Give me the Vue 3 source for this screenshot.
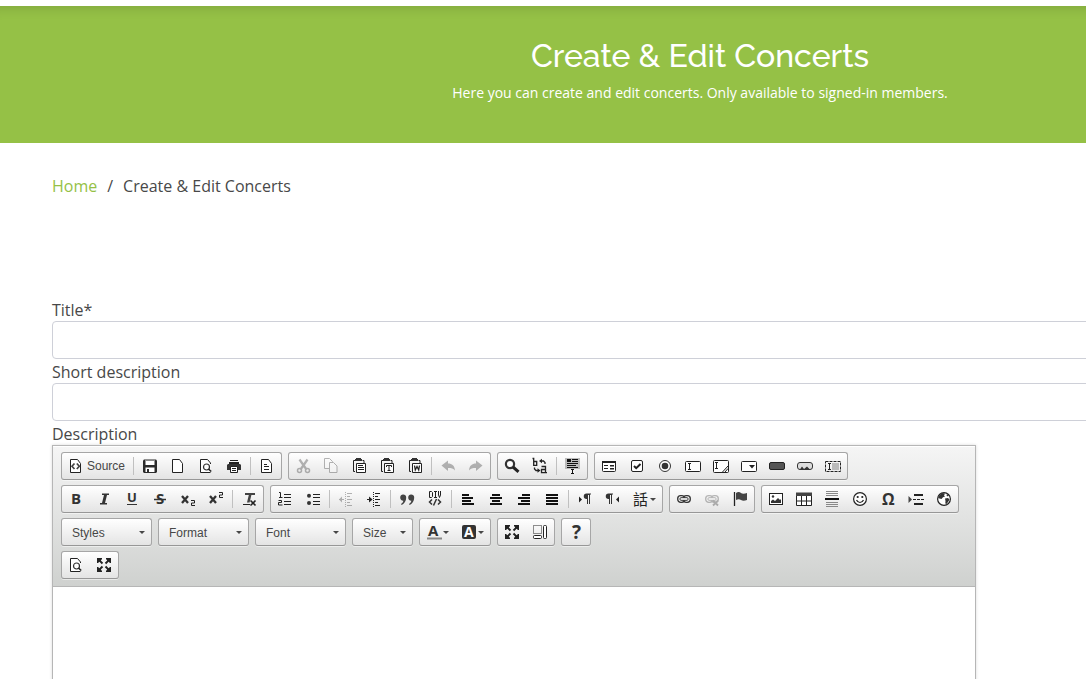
<script setup>
import { ref } from 'vue'

const title = ref('')
const shortDescription = ref('')
const body = ref('')

const page = '<path d="M2.5 1.5h7l3 4v9h-10z" fill="#fff" stroke="#222"/>'
const clip = '<path d="M4 2.5H2.5V13.5H4M11.5 2.5H13V5" fill="none" stroke="#222"/><path d="M5 0h5v1h1v2H4V1h1z" fill="#333"/><path d="M5.5 5.5h9v9h-9z" fill="#fff" stroke="#222"/>'
const expand = '<path d="M1 1h5v1L4.8 3.4l2.4 2.4-1.400 1.400-2.400-2.400L2 6H1zM15 1v5h-1l-1.400-1.200-2.400 2.400-1.400-1.400 2.400-2.400L10 2V1zM1 15v-5h1l1.400 1.200 2.400-2.400 1.400 1.400-2.400 2.400L6 14v1zM15 15h-5v-1l1.200-1.400-2.400-2.400 1.400-1.400 2.400 2.400L14 10h1z" fill="#222"/>'
const magnifierPage = '<path d="M12.500 6V5l-3-3.500h-7v13h10" fill="#fff" stroke="#222"/><circle cx="8.500" cy="9" r="3" fill="#fff" stroke="#333" stroke-width="1.200"/><path d="M10.500 11l2.700 2.500" stroke="#222" stroke-width="1.600"/>'
const chain = (c) => `<g fill="none" stroke="${c}" stroke-width="1.300"><rect x="1.700" y="4.700" width="7" height="6.600" rx="3"/><rect x="7.300" y="4.700" width="7" height="6.600" rx="3"/></g><rect x="4" y="6.700" width="8" height="2.600" rx="1" fill="#fff" stroke="${c}"/>`
const bars = (rows) => rows.map(([x, w], i) => `<rect x="${x}" y="${3 + i * 3}" width="${w}" height="2" fill="#111"/>`).join('')
const glyph = (ch, x, y, size) => `<text x="${x}" y="${y}" font-size="${size}" font-weight="bold" font-family="Open Sans, sans-serif" fill="#333">${ch}</text>`
const indentLines = '<path d="M7.500 1v15" stroke="#222" stroke-dasharray="1 1"/><path d="M9 2.500h5M9 5.500h3M9 8.500h5M9 11.500h3M9 14.500h5" stroke="#222"/>'
const pilcrow = (x) => `<path transform="translate(${x} 0)" d="M7 2.500H2.500A2.300 2.300 0 0 0 2.500 8H3v5h1V4h1v9h1V3.500h1z" fill="#333"/>`

const icons = {
  source: page + '<path d="M6.500 5.500L4 8.300l2.500 2.700M8.800 5.500l2.500 2.800-2.500 2.700" fill="none" stroke="#444" stroke-width="1.700"/>',
  save: '<path d="M2 1.500h12l1 1V14l-1 1H2l-1-1V2.500z" fill="#2b2b2b"/><path d="M3.500 2h9v5h-9z" fill="#fff"/><path d="M3.500 2.500h9" stroke="#888"/><path d="M3.500 9.500h9V14h-9z" fill="#fff"/><path d="M5 11h2v3H5z" fill="#2b2b2b"/>',
  newpage: page,
  preview: magnifierPage,
  print: '<path d="M4 2h8v1H4zM3 4h10v2H3z" fill="#222"/><path d="M2 6h12l1 1v5h-3V9H4v3H1V7z" fill="#333"/><path d="M4.500 8.500h7v6h-7z" fill="#fff" stroke="#222"/><path d="M6 10.500h4M6 12.500h4" stroke="#222"/>',
  templates: page + '<path d="M5 6.500h3M5 8.500h5M5 11.500h5" stroke="#222"/>',
  cut: '<path d="M4.500 1.500l7 10M12.500 1.500l-7 10" stroke="#222" stroke-width="2.200"/><g fill="none" stroke="#222" stroke-width="1.500"><circle cx="4.500" cy="12.500" r="2"/><circle cx="12.500" cy="12.500" r="2"/></g>',
  copy: '<path d="M1.500 .500h5l3 3v7h-8z" fill="#fff" stroke="#222"/><path d="M6.500 4.500h4l3.500 3.500v6.500H6.500z" fill="#fff" stroke="#222"/>',
  paste: clip + '<path d="M7 7.500h5M7 9.500h6M7 11.500h6" stroke="#222"/>',
  pastetext: clip + '<path d="M7.500 9V7.500h5V9M10 7.500v5M8.500 12.500h3" stroke="#222" fill="none"/>',
  pasteword: clip + '<path d="M7.500 7.500l.8 4.500L10 8.500l1.700 3.500.8-4.500" stroke="#222" stroke-width="1.300" fill="none"/>',
  undo: '<path d="M1.500 7.500L8 2.500v3c4 0 6.500 2 7 7-1.500-2-3.500-2.500-7-2.500v3z" fill="#222"/>',
  redo: '<path d="M14.500 7.500L8 2.500v3c-4 0-6.500 2-7 7 1.500-2 3.500-2.500 7-2.500v3z" fill="#222"/>',
  find: '<circle cx="6" cy="6" r="4.100" fill="#fff" stroke="#333" stroke-width="2.200"/><path d="M9 9l5.500 4.800" stroke="#222" stroke-width="3"/>',
  replace: '<g fill="none" stroke="#222" stroke-width="1.300"><path d="M.500 .500h1.200v6.800h3V3.500h-3M9.500 8.500h4v6.200h-4v-3.200h4M13.500 14.600H15"/><path d="M13 6V4.500L11.500 3H9M2.500 9.500V11L4 12.500h2"/></g><path d="M10 .800v4.400L7 3zM5.500 10.300v4.400l3-2.200z" fill="#222"/>',
  selectall: '<path d="M0 0h15v11H0z" fill="#bbb"/><path d="M2 1h4v3H2z" fill="#111"/><path d="M7 1.500h6M7 3.500h6M2 5.500h11M2 7.500h9M2 9.500h11" stroke="#111"/><path d="M5 11h5v5H5z" fill="#f2f2f2"/><path d="M6 11.500h3M6 15.500h3M7.500 11v5" stroke="#111"/>',
  form: '<rect x="1.500" y="3.500" width="13" height="10" rx="1" fill="#fff" stroke="#222"/><path d="M1 3h14v2H1z" fill="#222"/><path d="M3 7.500h4M3 10.500h4" stroke="#222"/><path d="M9 7h4v1.500H9zM9 10h4v1.500H9z" fill="#222"/>',
  checkbox: '<rect x="2.500" y="2.500" width="11" height="11" rx="1.500" fill="#fff" stroke="#222"/><path d="M5 8l2.200 2.200L11.500 6" fill="none" stroke="#222" stroke-width="2"/>',
  radio: '<circle cx="8" cy="8" r="5.500" fill="#fff" stroke="#333"/><circle cx="8" cy="8" r="3.300" fill="#333"/>',
  textfield: '<rect x=".500" y="3.500" width="15" height="10" rx="1" fill="#fff" stroke="#222"/><path d="M3 5.500h3M3 11.500h3M4.500 5v7" stroke="#222"/>',
  textarea: '<rect x=".500" y="2.500" width="15" height="12" rx="1" fill="#fff" stroke="#222"/><path d="M2 4.500h3M2 10.500h3M3.500 4v7M9.500 14L15 8M12 14l3-3.500" stroke="#222"/>',
  select: '<rect x=".500" y="3.500" width="15" height="10" rx="1" fill="#fff" stroke="#222"/><path d="M8 7h6l-3 3.500z" fill="#222"/>',
  button: '<rect x=".500" y="4.500" width="15" height="7" rx="1.500" fill="#555" stroke="#222"/>',
  imagebutton: '<rect x=".500" y="4.500" width="15" height="7" rx="2.500" fill="#ddd" stroke="#333"/><path d="M2.500 12l2.500-3.500 2 2.500 3-2.500 3.500 3.500z" fill="#333"/>',
  hidden: '<path d="M7 5h7v7H7z" fill="#bbb"/><rect x=".500" y="3.500" width="15" height="10" fill="none" stroke="#222" stroke-dasharray="3 1"/><path d="M3 5.500h3M3 11.500h3M4.500 5v7" stroke="#222"/>',
  bold: glyph('B', 3, 13, 15),
  italic: '<path d="M6 2.500h7V4h-2L9 12h2v1.500H4V12h2l2-8H6z" fill="#333"/>',
  underline: glyph('U', 3, 11, 13) + '<path d="M3 13.500h10" stroke="#333"/>',
  strike: glyph('S', 4, 13, 15) + '<path d="M2 8.500h12" stroke="#333" stroke-width="1.500"/>',
  subscript: '<path d="M2 5l6 7M8 5l-6 7" stroke="#333" stroke-width="2.300"/><path d="M11 9.500h3.500v2.500h-3v2.500H15" fill="none" stroke="#222"/>',
  superscript: '<path d="M2 5l6 7M8 5l-6 7" stroke="#333" stroke-width="2.300"/><path d="M11 1.500h3.500V4h-3v2.500H15" fill="none" stroke="#222"/>',
  removeformat: '<path d="M4 2h10v2h-3.600L8.600 11.500H6L7.800 4H4z" fill="#444"/><path d="M2 13.500h7" stroke="#222"/><path d="M9.500 9.500l5 5M14.500 9.500l-5 5" stroke="#222" stroke-width="1.600"/>',
  numbered: '<path d="M2 1.500h1.500V6.500M2 6.500h3.500M1.500 9.500h3v2h-3v2.500h4" fill="none" stroke="#222"/><path d="M7 3.500h7M7 6.500h7M7 10.500h7M7 13.500h7" stroke="#222"/>',
  bulleted: '<circle cx="4" cy="4.700" r="2" fill="#333"/><circle cx="4" cy="12" r="2" fill="#333"/><path d="M8 3.500h7M8 6.500h7M8 10.500h7M8 13.500h7" stroke="#222"/>',
  outdent: indentLines + '<path d="M1 8.500h5" stroke="#222"/><path d="M4 5.500v6l-3-3z" fill="#222"/>',
  indent: indentLines + '<path d="M1 8.500h4" stroke="#222"/><path d="M3 5.500v6l3.500-3z" fill="#222"/>',
  quote: '<path d="M4 3.500a3 3 0 0 1 3.200 3.200c0 3.300-1.800 5.800-4.500 7.300l-.7-1c1.500-1 2.300-2 2.300-3.200C2.300 9.700 1.200 8.400 1.200 6.600 1.200 4.800 2.500 3.500 4 3.500zM12 3.500a3 3 0 0 1 3.200 3.200c0 3.300-1.800 5.800-4.500 7.300l-.7-1c1.500-1 2.300-2 2.300-3.200-2-.1-3.100-1.400-3.100-3.200 0-1.800 1.300-3.100 2.800-3.100z" fill="#444"/>',
  div: '<path d="M2.500 .500h2l1 1v4l-1 1h-2zM7 .500h3M8.500 .500v6M7 6.500h3M11.500 0v4l1 2.500 1-2.500V0" fill="none" stroke="#222"/><path d="M5 8.500L2.500 11l2.500 2.500M11 8.500l2.500 2.500-2.500 2.500M9.500 8l-3 6.500" fill="none" stroke="#333" stroke-width="1.500"/>',
  left: bars([[2, 7], [2, 11], [2, 9], [2, 12]]),
  center: bars([[4, 8], [2, 12], [4, 8], [2, 12]]),
  right: bars([[6, 8], [2, 12], [5, 9], [2, 12]]),
  justify: bars([[2, 12], [2, 12], [2, 12], [2, 12]]),
  ltr: '<path d="M2 5.500L5 8.500 2 11.500z" fill="#222"/>' + pilcrow(7),
  rtl: '<path d="M14 5.500L11 8.500l3 3z" fill="#222"/>' + pilcrow(1),
  language: '<text x="0" y="14" font-size="15" font-family="Noto Sans CJK TC, Noto Sans CJK SC, sans-serif" fill="#222">話</text>',
  link: chain('#333'),
  unlink: chain('#333') + '<path d="M9 9.500l5 5M14 9.500l-5 5" stroke="#222" stroke-width="1.800"/>',
  anchor: '<path d="M2.500 1v14" stroke="#222" stroke-width="1.300"/><path d="M4 2c2-1.500 4-1 5 0s3.500 1 6 0v7c-2.500 1-4.500 1-6 0s-3-1-5 0z" fill="#444"/>',
  image: '<rect x="1.500" y="2.500" width="13" height="11" fill="#fff" stroke="#222"/><path d="M3 12v-2l2-1.500 2 1.500 3-3 2 2 1-1v4z" fill="#333"/><circle cx="5" cy="5.500" r="1.200" fill="#333"/>',
  table: '<path d="M.500 2.500h15v12H.500zM5.500 5v9M10.500 5v9M0 10h16" fill="#fff" stroke="#222"/><path d="M0 1.500h16V5H0z" fill="#444"/>',
  rule: '<path d="M2 .500h12M2 2.500h12M2 4.500h12M2 11.500h12M2 13.500h12M2 15.500h12" stroke="#888"/><path d="M1 8h14" stroke="#111" stroke-width="2"/>',
  smiley: '<circle cx="8" cy="8" r="6.400" fill="#fff" stroke="#222" stroke-width="1.200"/><circle cx="5.700" cy="6" r="1.100" fill="#222"/><circle cx="10.300" cy="6" r="1.100" fill="#222"/><path d="M4.500 9c1.500 3.300 5.500 3.300 7 0" fill="none" stroke="#222" stroke-width="1.200"/>',
  omega: glyph('Ω', 2, 14, 16),
  pagebreak: '<path d="M.500 5l3.500 3.500-3.500 3.500z" fill="#444"/><path d="M6 4h9M6 13h9" stroke="#222" stroke-width="2"/><path d="M5 8.500h11" stroke="#222" stroke-dasharray="3 1"/>',
  globe: '<circle cx="8" cy="8" r="6.400" fill="#fff" stroke="#222" stroke-width="1.200"/><path d="M3.500 4L6.500 2l2.500.500-1 2 1 1-2 .800L5.500 8 3.500 7.500 2 7zM9 7.500l3-.500 1.500 1.500-1.500 2.500-1.500 2-1.200-.500.200-2.500zM11 3l1.800 1.500-1 1-1.300-1z" fill="#333"/>',
  textcolor: glyph('A', 2, 12, 15) + '<path d="M1 14.500h15" stroke="#888" stroke-width="2"/>',
  bgcolor: '<rect x="1" y="1" width="14" height="14" rx="2" fill="#333"/><text x="3" y="13" font-size="14" font-weight="bold" font-family="Open Sans, sans-serif" fill="#fff">A</text>',
  maximize: expand,
  blocks: '<path d="M1.500 1.500h8v8h-8z" fill="none" stroke="#222" stroke-dasharray="1 1"/><rect x="1.500" y="11.500" width="8" height="3" rx="1" fill="#fff" stroke="#222"/><rect x="11.500" y="1.500" width="3" height="13" rx="1" fill="#fff" stroke="#222"/>',
  about: '<text x="4" y="15" font-size="19" font-weight="bold" font-family="Open Sans, sans-serif" fill="#333">?</text>'
}

const b = (icon, label, opts = {}) => ({ icon, label, ...opts })
const sep = { sep: true }
const off = { disabled: true }

const rows = [
  [
    [b('source', 'Source', { text: true }), sep, b('save', 'Save'), b('newpage', 'New Page'), b('preview', 'Preview'), b('print', 'Print'), sep, b('templates', 'Templates')],
    [b('cut', 'Cut', off), b('copy', 'Copy', off), b('paste', 'Paste'), b('pastetext', 'Paste as plain text'), b('pasteword', 'Paste from Word'), sep, b('undo', 'Undo', off), b('redo', 'Redo', off)],
    [b('find', 'Find'), b('replace', 'Replace'), sep, b('selectall', 'Select All')],
    [b('form', 'Form'), b('checkbox', 'Checkbox'), b('radio', 'Radio Button'), b('textfield', 'Text Field'), b('textarea', 'Textarea'), b('select', 'Selection Field'), b('button', 'Button'), b('imagebutton', 'Image Button'), b('hidden', 'Hidden Field')]
  ],
  [
    [b('bold', 'Bold'), b('italic', 'Italic'), b('underline', 'Underline'), b('strike', 'Strikethrough'), b('subscript', 'Subscript'), b('superscript', 'Superscript'), sep, b('removeformat', 'Remove Format')],
    [b('numbered', 'Numbered List'), b('bulleted', 'Bulleted List'), sep, b('outdent', 'Decrease Indent', off), b('indent', 'Increase Indent'), sep, b('quote', 'Block Quote'), b('div', 'Create Div Container'), sep, b('left', 'Align Left'), b('center', 'Center'), b('right', 'Align Right'), b('justify', 'Justify'), sep, b('ltr', 'Left to right'), b('rtl', 'Right to left'), b('language', 'Set language', { menu: true })],
    [b('link', 'Link'), b('unlink', 'Unlink', off), b('anchor', 'Anchor')],
    [b('image', 'Image'), b('table', 'Table'), b('rule', 'Horizontal Line'), b('smiley', 'Smiley'), b('omega', 'Special Character'), b('pagebreak', 'Page Break'), b('globe', 'IFrame')]
  ],
  [
    [{ combo: 'Styles' }],
    [{ combo: 'Format' }],
    [{ combo: 'Font' }],
    [{ combo: 'Size', small: true }],
    [b('textcolor', 'Text Color', { menu: true }), b('bgcolor', 'Background Color', { menu: true })],
    [b('maximize', 'Maximize'), b('blocks', 'Show Blocks')],
    [b('about', 'About')]
  ],
  [
    [b('preview', 'Preview'), b('maximize', 'Maximize')]
  ]
]
</script>

<template>
  <div class="page">
    <header class="banner">
      <h1>Create &amp; Edit Concerts</h1>
      <p>Here you can create and edit concerts. Only available to signed-in members.</p>
    </header>
    <main class="content">
      <nav class="crumbs" aria-label="Breadcrumb">
        <a href="#">Home</a>
        <span>/</span>
        <span>Create &amp; Edit Concerts</span>
      </nav>
      <form class="form" @submit.prevent>
        <label for="title">Title*</label>
        <input id="title" v-model="title" type="text" class="field" />
        <label for="short">Short description</label>
        <input id="short" v-model="shortDescription" type="text" class="field" />
        <label for="body">Description</label>
        <div class="editor">
          <div class="toolbar" role="toolbar" aria-label="Editor toolbar">
            <div v-for="(row, r) in rows" :key="r" class="row">
              <div v-for="(group, g) in row" :key="g" class="group">
                <template v-for="(item, i) in group" :key="i">
                  <span v-if="item.sep" class="sep"></span>
                  <span v-else-if="item.combo" class="combo" :class="{ small: item.small }">
                    <select :aria-label="item.combo">
                      <option>{{ item.combo }}</option>
                    </select>
                    <span class="arrow"></span>
                  </span>
                  <button v-else type="button" class="tool" :disabled="item.disabled" :aria-label="item.label">
                    <svg viewBox="0 0 16 16" width="16" height="16" aria-hidden="true" v-html="icons[item.icon]"></svg>
                    <span v-if="item.text" class="tool-label">{{ item.label }}</span>
                    <span v-if="item.menu" class="arrow"></span>
                  </button>
                </template>
              </div>
            </div>
          </div>
          <textarea id="body" v-model="body" class="body"></textarea>
        </div>
      </form>
    </main>
  </div>
</template>

<style>
html {
  overflow: hidden auto;
  scrollbar-width: none;
}
body {
  margin: 0;
  background: #fff;
}
</style>

<style scoped>
.page {
  min-width: 1400px;
  padding-top: 6px;
  color: #484848;
  font: 16px/24px "Open Sans", "Noto Sans", sans-serif;
}
.page *,
.page {
  box-sizing: border-box;
}
.banner {
  padding: 30px 20px 38px;
  text-align: center;
  color: #fff;
  background: #95c146;
  box-shadow: inset 0 14px 14px -14px rgba(0, 0, 0, 0.18);
}
.banner h1 {
  margin: 0 0 5px;
  font: 500 32px/40px Raleway, Lato, sans-serif;
}
.banner p {
  margin: 0;
  font-size: 14px;
  line-height: 24px;
}
.content {
  padding: 31px 52px 0;
}
.crumbs {
  display: flex;
  gap: 10px;
}
.crumbs a {
  color: #95c146;
  text-decoration: none;
}
.form {
  display: flex;
  flex-direction: column;
  margin-top: 99px;
}
.form label {
  height: 24px;
  line-height: 26px;
}
.field {
  width: 100%;
  height: 38px;
  padding: 6px 12px;
  border: 1px solid #ced0d8;
  border-radius: 4px;
  font: inherit;
  color: inherit;
  background: #fff;
}
.editor {
  width: 100%;
  max-width: 924px;
  border: 1px solid #b6b6b6;
  box-shadow: 0 0 3px rgba(0, 0, 0, 0.15);
}
.toolbar {
  padding: 6px 8px 2px;
  border-bottom: 1px solid #b6b6b6;
  background: linear-gradient(#f5f5f5, #cfd1cf);
  box-shadow: inset 0 1px 0 #fff;
}
.row {
  display: flex;
  gap: 6px;
  padding-bottom: 5px;
}
.group {
  display: flex;
  align-items: center;
  height: 28px;
  border: 1px solid #a6a6a6;
  border-bottom-color: #979797;
  border-radius: 3px;
  background: linear-gradient(#fff, #e4e4e4);
  box-shadow: 0 1px 0 rgba(255, 255, 255, 0.5);
}
.sep {
  width: 1px;
  height: 18px;
  margin: 0 2px;
  background: #c0c0c0;
}
.tool {
  display: flex;
  align-items: center;
  height: 26px;
  padding: 0 6px;
  border: 0;
  background: none;
  color: #474747;
  font: 12px/16px "Liberation Sans", Arial, sans-serif;
}
.tool svg {
  display: block;
  overflow: visible;
}
.tool:disabled svg {
  opacity: 0.32;
}
.tool-label {
  padding-left: 3px;
}
.arrow {
  border: 3px solid transparent;
  border-top-color: #474747;
  border-bottom-width: 0;
  pointer-events: none;
}
.tool .arrow {
  margin-left: 1px;
}
.combo {
  display: grid;
  align-items: center;
  width: 89px;
}
.combo.small {
  width: 59px;
}
.combo select,
.combo .arrow {
  grid-area: 1 / 1;
}
.combo select {
  width: 100%;
  height: 26px;
  padding: 1px 20px 0 10px;
  border: 0;
  appearance: none;
  background: none;
  color: #474747;
  font: 12px/26px "Liberation Sans", Arial, sans-serif;
}
.combo .arrow {
  justify-self: end;
  margin-right: 6px;
}
.body {
  display: block;
  width: 100%;
  height: 200px;
  padding: 20px;
  border: 0;
  outline: 0;
  resize: none;
  font: inherit;
}
</style>
